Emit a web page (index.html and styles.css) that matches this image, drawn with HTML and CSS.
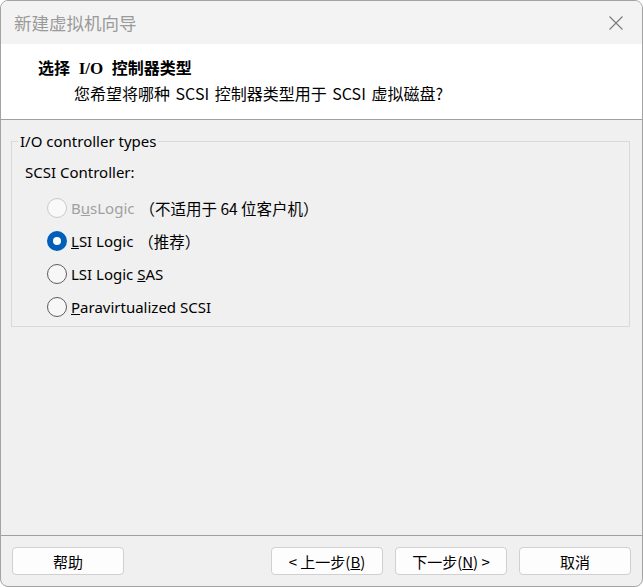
FILE: index.html
```html
<!DOCTYPE html>
<html lang="zh-CN">

<head>
    <meta charset="UTF-8">
    <meta name="viewport" content="width=device-width, initial-scale=1.0">
    <title>新建虚拟机向导</title>
    <link rel="stylesheet" href="styles.css">
</head>

<body>

    <div class="window">
        <div class="titlebar">
            <span class="title">新建虚拟机向导</span>
            <svg class="close" width="16" height="16" viewBox="0 0 16 16" aria-label="关闭">
                <path d="M1.5 1.5 L14.5 14.5 M14.5 1.5 L1.5 14.5" stroke="#7a7a7a" stroke-width="1.1" fill="none" />
            </svg>
        </div>

        <div class="header">
            <div class="heading">选择 <span class="latin">I/O</span> 控制器类型</div>
            <div class="subheading">您希望将哪种 SCSI 控制器类型用于 SCSI 虚拟磁盘?</div>
        </div>

        <div class="content">
            <fieldset class="group">
                <legend>I/O controller types</legend>
                <div class="group-label">SCSI Controller:</div>
                <div class="options">
                    <label class="option disabled">
                        <span class="radio"></span>
                        <span class="name">B<u>u</u>sLogic</span>
                        <span class="note">（不适用于 64 位客户机）</span>
                    </label>
                    <label class="option">
                        <span class="radio checked"></span>
                        <span class="name"><u>L</u>SI Logic</span>
                        <span class="note">（推荐）</span>
                    </label>
                    <label class="option">
                        <span class="radio"></span>
                        <span class="name">LSI Logic <u>S</u>AS</span>
                    </label>
                    <label class="option">
                        <span class="radio"></span>
                        <span class="name"><u>P</u>aravirtualized SCSI</span>
                    </label>
                </div>
            </fieldset>
        </div>

        <div class="footer">
            <button class="button">帮助</button>
            <div class="button-row">
                <button class="button">&lt; 上一步(<u>B</u>)</button>
                <button class="button">下一步(<u>N</u>) &gt;</button>
                <button class="button">取消</button>
            </div>
        </div>
    </div>

</body>

</html>
```

FILE: styles.css
```css
body {
    margin: 0;
    background: #ffffff;
    font-family: "Noto Sans", "Noto Sans CJK SC", sans-serif;
}

.window {
    box-sizing: border-box;
    width: 643px;
    height: 587px;
    border: 1px solid #a3a3a3;
    border-radius: 8px;
    overflow: hidden;
    background: #f0f0f0;
    display: flex;
    flex-direction: column;
}

.titlebar {
    height: 43px;
    flex: none;
    background: #f3f3f3;
    display: flex;
    align-items: center;
    justify-content: space-between;
    padding: 0 18px 0 13px;
}

.title {
    font-family: "Noto Sans CJK SC", sans-serif;
    font-size: 17.5px;
    color: #9a9a9a;
}

.close {
    display: block;
}

.header {
    height: 76px;
    flex: none;
    box-sizing: border-box;
    background: #ffffff;
    border-bottom: 1px solid #a0a0a0;
    padding: 13px 0 0 37px;
    font-family: "Noto Sans CJK SC", sans-serif;
    font-size: 16px;
    line-height: 20px;
    color: #000;
}

.heading {
    font-weight: 700;
    word-spacing: 5px;
}

.heading .latin {
    font-family: "Liberation Serif", serif;
    font-size: 17px;
}

.subheading {
    margin-top: 4px;
    padding-left: 36px;
    word-spacing: 2px;
}

.content {
    flex: 1;
    padding: 11px 12px 0 10px;
}

.group {
    margin: 0;
    padding: 0 0 3px 13px;
    border: 1px solid #d9d9d9;
    font-size: 15px;
    color: #000;
}

.group legend {
    padding: 0 2px;
    margin-left: -7px;
    line-height: 20px;
}

.group-label {
    line-height: 20px;
    margin: 11px 0 9px;
}

.options {
    padding-left: 22px;
}

.option {
    height: 33px;
    display: flex;
    align-items: center;
}

.option.disabled .name {
    color: #a0a0a0;
}

.radio {
    box-sizing: border-box;
    width: 20px;
    height: 20px;
    border-radius: 50%;
    border: 1px solid #5c5c5c;
    background: #f7f7f7;
    margin-right: 4px;
    flex: none;
}

.option.disabled .radio {
    border-color: #c9c9c9;
    background: #f9f9f9;
}

.radio.checked {
    border: 6px solid #005fb8;
    background: #ffffff;
}

.note {
    font-family: "Noto Sans CJK SC", sans-serif;
    font-size: 15.5px;
    margin-left: 5px;
}

.footer {
    flex: none;
    border-top: 1px solid #a0a0a0;
    padding: 11px 11px;
    display: flex;
    justify-content: space-between;
}

.button-row {
    display: flex;
    gap: 12px;
}

.button {
    width: 112px;
    height: 28px;
    background: #fdfdfd;
    border: 1px solid #d0d0d0;
    border-radius: 4px;
    font-family: "Noto Sans CJK SC", sans-serif;
    font-size: 15px;
    color: #000;
    padding: 0;
}
```
